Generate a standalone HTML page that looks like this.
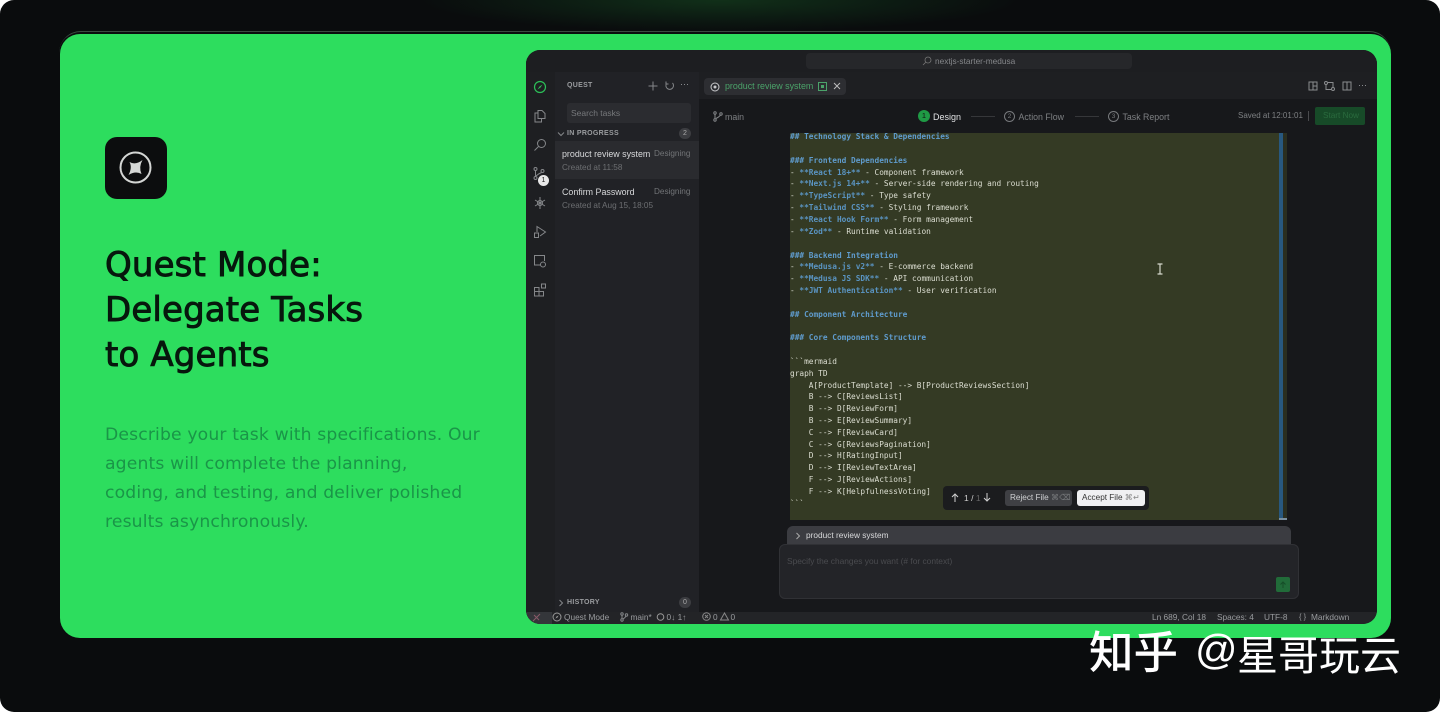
<!DOCTYPE html>
<html><head><meta charset="utf-8"><style>
html,body{margin:0;padding:0;background:#fff;width:1440px;height:712px;overflow:hidden}
#r{position:absolute;left:0;top:0;width:1440px;height:712px;overflow:hidden;background:#0a0c0d;border-radius:14px;font-family:"Liberation Sans",sans-serif}
.a{position:absolute}
.t{position:absolute;white-space:nowrap;line-height:12px;font-size:8.5px;color:#9a9c9f}
.c{position:absolute;left:790px;margin-top:.8px;white-space:pre;font:7.8px/12px "DejaVu Sans Mono","Liberation Mono",monospace;color:#dcded2}
.h{color:#5f9bcc;font-weight:bold}
.b{color:#5a94c2;font-weight:bold}
.ht{position:absolute;left:105px;white-space:nowrap;font-family:"DejaVu Sans",sans-serif;font-size:34px;line-height:44px;font-weight:normal;-webkit-text-stroke:.9px #07170d;letter-spacing:.15px;color:#07170d}
.p{position:absolute;left:105px;white-space:nowrap;font-family:"DejaVu Sans",sans-serif;font-size:17.2px;line-height:28px;letter-spacing:.15px;color:#1a9548}
svg{position:absolute;overflow:visible}
.i{fill:none;stroke:#85878a;stroke-width:1}
</style></head><body><div id="r">
<div class="a" style="left:420px;top:0;width:600px;height:60px;background:radial-gradient(ellipse 300px 32px at 300px 0,#113019 0,#0c1a12 60%,rgba(10,12,13,0) 100%)"></div>
<div class="a" style="left:59px;top:31px;width:1332px;height:608px;border-radius:22px;border-top:1px solid #3a4a40;box-sizing:border-box"></div>
<div class="a" style="left:60px;top:34px;width:1331px;height:604px;background:#2ddd5e;border-radius:20px"></div>

<div class="a" style="left:105px;top:137px;width:62px;height:62px;background:#0c0d0e;border-radius:12px"></div>
<svg style="left:105px;top:137px" width="62" height="62"><circle cx="30.5" cy="30.5" r="15" fill="none" stroke="#d4d6d4" stroke-width="2"/><path d="M37.500 23 Q33.500 30 36.500 37 Q30.500 33.500 23.500 38 Q27.500 30.500 24.500 25 Q30.500 28.500 37.500 23Z" fill="#d4d6d4"/></svg>
<div class="ht" style="top:242.500px">Quest Mode:</div>
<div class="ht" style="top:287.500px">Delegate Tasks</div>
<div class="ht" style="top:332.500px">to Agents</div>
<div class="p" style="top:420.500px">Describe your task with specifications. Our</div>
<div class="p" style="top:449.500px">agents will complete the planning,</div>
<div class="p" style="top:478.500px">coding, and testing, and deliver polished</div>
<div class="p" style="top:507.500px">results asynchronously.</div>

<div class="a" style="left:526px;top:50px;width:851px;height:574px;background:#1b1c1f;border-radius:14px;overflow:hidden;filter:blur(.25px)">
  <div class="a" style="left:0;top:0;width:851px;height:22px;background:#1d1e21"></div>
  <div class="a" style="left:280px;top:3px;width:326px;height:16px;background:#26272a;border-radius:4px"></div>
  <div class="a" style="left:0;top:22px;width:29px;height:540px;background:#1e1f22;border-right:1px solid #16171a"></div>
  <div class="a" style="left:29px;top:22px;width:144px;height:540px;background:#212226"></div>
  <div class="a" style="left:173px;top:22px;width:678px;height:27px;background:#1e1f22"></div>
  <div class="a" style="left:173px;top:49px;width:678px;height:513px;background:#17181b"></div>
  <div class="a" style="left:0;top:562px;width:851px;height:12px;background:#232427"></div>
  <div class="a" style="left:0;top:562px;width:26px;height:12px;background:#34363a"></div>
  <div class="a" style="left:29px;top:91px;width:144px;height:38px;background:#2a2b2f"></div>
  <div class="a" style="left:41px;top:53px;width:124px;height:20px;background:#2b2c30;border-radius:3px"></div>
  <div class="a" style="left:178px;top:28px;width:142px;height:17px;background:#2d2e32;border-radius:4px"></div>
  <div class="a" style="left:264px;top:83px;width:497px;height:387px;background:#343a24"></div>
  <div class="a" style="left:753px;top:83px;width:4px;height:387px;background:#28587f"></div>
  <div class="a" style="left:757px;top:83px;width:4px;height:387px;background:#2a2e20"></div>
  <div class="a" style="left:753px;top:468px;width:8px;height:2px;background:#7a8f9f"></div>
  <div class="a" style="left:261px;top:476px;width:504px;height:30px;background:#3b3c41;border-radius:6px 6px 0 0"></div>
  <div class="a" style="left:253px;top:494px;width:520px;height:55px;background:#232428;border:1px solid #303135;border-radius:6px;box-sizing:border-box"></div>
  <div class="a" style="left:750px;top:527px;width:14px;height:15px;background:#216b39;border-radius:2px"></div>
  <div class="a" style="left:789px;top:57px;width:50px;height:18px;background:#174a28;border-radius:2px"></div>
  <div class="a" style="left:417px;top:436px;width:206px;height:24px;background:#1b1c1e;border-radius:4px"></div>
  <div class="a" style="left:479px;top:440px;width:67px;height:16px;background:#3f4044;border-radius:3px"></div>
  <div class="a" style="left:551px;top:440px;width:68px;height:16px;background:#f0f0f2;border-radius:3px"></div>
</div>

<svg style="left:533px;top:80px" width="14" height="14"><circle cx="7" cy="7" r="5.500" fill="none" stroke="#2cc058" stroke-width="1.200"/><path d="M9.500 4.500 L7.500 7.500 L4.500 9.500 L6.500 6.500Z" fill="#2cc058"/></svg>
<svg style="left:533px;top:109px" width="14" height="14"><path class="i" d="M5 1.500h4l3 3v5h-7zM5 4H2v9h6.500v-3.500"/></svg>
<svg style="left:533px;top:138px" width="14" height="14"><circle class="i" cx="8.500" cy="5.500" r="4"/><path class="i" d="M5.500 8.500 L1.500 12.500"/></svg>
<svg style="left:533px;top:167px" width="14" height="14"><circle class="i" cx="2.500" cy="2" r="1.500"/><circle class="i" cx="2.500" cy="11" r="1.500"/><circle class="i" cx="9.500" cy="4" r="1.500"/><path class="i" d="M2.500 3.500v6M8.500 5.500 Q5 7 3 9"/></svg>
<div class="a" style="left:538px;top:175px;width:11px;height:11px;border-radius:50%;background:#e8e8e8;color:#222;font-size:7px;line-height:11px;text-align:center">1</div>
<svg style="left:533px;top:196px" width="14" height="14"><path class="i" d="M7 1v12M2 4l10 6M12 4L2 10"/><circle class="i" cx="7" cy="7" r="2.500" fill="#1e1f22"/></svg>
<svg style="left:533px;top:225px" width="14" height="14"><path class="i" d="M4 7V1.500L12.500 7 7 11"/><rect class="i" x="1.500" y="8" width="4" height="4.500"/></svg>
<svg style="left:533px;top:254px" width="14" height="14"><path class="i" d="M8 11H1.500V1.500h10V7"/><circle class="i" cx="10" cy="10.500" r="2.500"/></svg>
<svg style="left:533px;top:283px" width="14" height="14"><path class="i" d="M1.500 4.500h4.500v8.500H1.500zM1.500 8.500h9V13H6"/><rect class="i" x="8.500" y="1" width="4" height="4"/></svg>

<div class="t" style="left:567px;top:80px;font-size:7px;font-weight:bold;letter-spacing:.3px">QUEST</div>
<svg style="left:647px;top:80px" width="40" height="12"><path class="i" d="M6 1.500v9M1.500 6h9"/><path class="i" d="M25.500 3 A3.800 3.800 0 1 1 19.500 3.500M19 1.500v2.500h2.500"/></svg>
<div class="t" style="left:680px;top:78px;font-size:9px">···</div>
<div class="t" style="left:571px;top:107px;color:#77797c;font-size:8.500px">Search tasks</div>
<svg style="left:557px;top:130px" width="8" height="8"><path class="i" d="M1 2.500L4 5.500 7 2.500"/></svg>
<div class="t" style="left:567px;top:127.500px;font-size:7px;font-weight:bold;letter-spacing:.3px">IN PROGRESS</div>
<div class="a" style="left:679px;top:128px;width:12px;height:11px;border-radius:6px;background:#3c3d41;color:#aaa;font-size:7px;line-height:11px;text-align:center">2</div>
<div class="t" style="left:562px;top:148px;color:#d8d9db;font-size:8.900px">product review system</div>
<div class="t" style="left:654px;top:148px;color:#727477;font-size:8.200px">Designing</div>
<div class="t" style="left:562px;top:162px;color:#6d6f72;font-size:8.200px">Created at 11:58</div>
<div class="t" style="left:562px;top:186px;color:#d8d9db;font-size:8.900px">Confirm Password</div>
<div class="t" style="left:654px;top:186px;color:#727477;font-size:8.200px">Designing</div>
<div class="t" style="left:562px;top:200px;color:#6d6f72;font-size:8.200px">Created at Aug 15, 18:05</div>
<svg style="left:557px;top:599px" width="8" height="8"><path class="i" d="M2.500 1L5.500 4 2.500 7"/></svg>
<div class="t" style="left:567px;top:597px;font-size:7px;font-weight:bold;letter-spacing:.3px">HISTORY</div>
<div class="a" style="left:679px;top:597px;width:12px;height:11px;border-radius:6px;background:#3c3d41;color:#aaa;font-size:7px;line-height:11px;text-align:center">0</div>

<svg style="left:922px;top:56px" width="10" height="10"><circle cx="6" cy="4" r="3" fill="none" stroke="#777" stroke-width=".8"/><path d="M4 6L1 9" stroke="#777" stroke-width=".8"/></svg>
<div class="t" style="left:935px;top:55px;color:#85878a;font-size:8.300px">nextjs-starter-medusa</div>

<svg style="left:710px;top:82px" width="10" height="10"><circle cx="5" cy="5" r="4" fill="none" stroke="#c8c9cb"/><circle cx="5" cy="5" r="1.500" fill="#c8c9cb"/></svg>
<div class="t" style="left:725px;top:80px;color:#4ba36a;font-size:8.900px">product review system</div>
<div class="a" style="left:818px;top:82px;width:7px;height:7px;border:1px solid #4ba36a"></div>
<div class="a" style="left:821px;top:85px;width:3px;height:3px;background:#4ba36a"></div>
<svg style="left:833px;top:82px" width="8" height="8"><path d="M1 1L7 7M7 1L1 7" stroke="#bbb" stroke-width="1"/></svg>
<svg style="left:1308px;top:80px" width="60" height="12"><g class="i" style="stroke:#8a8c8f"><rect x="1" y="2" width="8" height="8"/><path d="M5 2v8M5 6h4"/><circle cx="18" cy="3" r="1.500"/><circle cx="25" cy="9" r="1.500"/><path d="M18 4.500v5h5M25 7.500V2.500h-5"/><rect x="35" y="2" width="8" height="8"/><path d="M39 2v8"/></g></svg>
<div class="t" style="left:1358px;top:79px;font-size:9px">···</div>

<svg style="left:713px;top:111px" width="10" height="11"><circle class="i" cx="2" cy="2" r="1.200"/><circle class="i" cx="2" cy="9" r="1.200"/><circle class="i" cx="8" cy="3" r="1.200"/><path class="i" d="M2 3.200v4.600M7.500 4.200Q6 6 3 7.500"/></svg>
<div class="t" style="left:725px;top:110.500px;font-size:8.800px;color:#7e8083">main</div>
<div class="a" style="left:918px;top:110px;width:12px;height:12px;border-radius:50%;background:#1f9a45;color:#111;font-size:7.500px;line-height:12px;text-align:center">1</div>
<div class="t" style="left:933px;top:110.500px;color:#e0e1e3;font-size:9px">Design</div>
<div class="a" style="left:971px;top:116px;width:24px;height:1px;background:#36373a"></div>
<div class="a" style="left:1004px;top:111px;width:9px;height:9px;border:1px solid #77797c;border-radius:50%;color:#77797c;font-size:6.500px;line-height:9px;text-align:center">2</div>
<div class="t" style="left:1018.500px;top:110.500px;color:#7e8083;font-size:8.800px">Action Flow</div>
<div class="a" style="left:1075px;top:116px;width:24px;height:1px;background:#36373a"></div>
<div class="a" style="left:1108px;top:111px;width:9px;height:9px;border:1px solid #77797c;border-radius:50%;color:#77797c;font-size:6.500px;line-height:9px;text-align:center">3</div>
<div class="t" style="left:1122.500px;top:110.500px;color:#7e8083;font-size:8.800px">Task Report</div>
<div class="t" style="left:1238px;top:110px;color:#7e8083;font-size:8px">Saved at 12:01:01</div>
<div class="a" style="left:1308px;top:111px;width:1px;height:10px;background:#4a4b4e"></div>
<div class="t" style="left:1323px;top:110px;color:#2a6b3e;font-size:8.200px">Start Now</div>

<div class="c h" style="top:130px">## Technology Stack &amp; Dependencies</div>
<div class="c h" style="top:154px">### Frontend Dependencies</div>
<div class="c" style="top:166px">- <span class="b">**React 18+**</span> - Component framework</div>
<div class="c" style="top:177.500px">- <span class="b">**Next.js 14+**</span> - Server-side rendering and routing</div>
<div class="c" style="top:189.500px">- <span class="b">**TypeScript**</span> - Type safety</div>
<div class="c" style="top:201px">- <span class="b">**Tailwind CSS**</span> - Styling framework</div>
<div class="c" style="top:213px">- <span class="b">**React Hook Form**</span> - Form management</div>
<div class="c" style="top:225px">- <span class="b">**Zod**</span> - Runtime validation</div>
<div class="c h" style="top:249px">### Backend Integration</div>
<div class="c" style="top:260.500px">- <span class="b">**Medusa.js v2**</span> - E-commerce backend</div>
<div class="c" style="top:272.500px">- <span class="b">**Medusa JS SDK**</span> - API communication</div>
<div class="c" style="top:284px">- <span class="b">**JWT Authentication**</span> - User verification</div>
<div class="c h" style="top:308px">## Component Architecture</div>
<div class="c h" style="top:331.500px">### Core Components Structure</div>
<div class="c" style="top:355px">&#96;&#96;&#96;mermaid</div>
<div class="c" style="top:367px">graph TD</div>
<div class="c" style="top:379px">    A[ProductTemplate] --&gt; B[ProductReviewsSection]</div>
<div class="c" style="top:390.500px">    B --&gt; C[ReviewsList]</div>
<div class="c" style="top:402.500px">    B --&gt; D[ReviewForm]</div>
<div class="c" style="top:414px">    B --&gt; E[ReviewSummary]</div>
<div class="c" style="top:426px">    C --&gt; F[ReviewCard]</div>
<div class="c" style="top:438px">    C --&gt; G[ReviewsPagination]</div>
<div class="c" style="top:449.500px">    D --&gt; H[RatingInput]</div>
<div class="c" style="top:461.500px">    D --&gt; I[ReviewTextArea]</div>
<div class="c" style="top:473px">    F --&gt; J[ReviewActions]</div>
<div class="c" style="top:485px">    F --&gt; K[HelpfulnessVoting]</div>
<div class="c" style="top:497px">&#96;&#96;&#96;</div>

<svg style="left:1156px;top:263px" width="8" height="12"><path d="M1.500 1h5M1.500 11h5M4 1v10" stroke="#d5d8cc" stroke-width="1.200" fill="none"/></svg>

<svg style="left:950px;top:492px" width="42" height="11"><path d="M5 10V2M2 5l3-3 3 3M37 1v8M34 6l3 3 3-3" stroke="#d0d0d0" fill="none"/></svg>
<div class="t" style="left:964px;top:491.500px;color:#d0d0d0;font-size:8.500px">1 / <span style="color:#666">1</span></div>
<div class="t" style="left:1010px;top:491.500px;color:#cfd0d2;font-size:8.200px">Reject File <span style="color:#77797c">&#8984;&#9003;</span></div>
<div class="t" style="left:1082px;top:491.500px;color:#333;font-size:8.200px">Accept File <span style="color:#888">&#8984;&#8629;</span></div>

<svg style="left:795px;top:532px" width="6" height="8"><path d="M1.500 1L4.500 4 1.500 7" stroke="#aaa" fill="none"/></svg>
<div class="t" style="left:806px;top:529px;color:#d8d9db;font-size:8.300px">product review system</div>
<div class="t" style="left:787px;top:555px;color:#4a4b4f;font-size:8.400px">Specify the changes you want (# for context)</div>
<svg style="left:1279px;top:581px" width="8" height="8"><path d="M4 7V1M1.500 3.500L4 1l2.500 2.500" stroke="#164d28" fill="none"/></svg>

<svg style="left:532px;top:613px" width="9" height="9"><path d="M1 8L8 1M2 2l5 5" stroke="#8a5a6a" fill="none"/></svg>
<svg style="left:552px;top:612px" width="10" height="10"><circle cx="5" cy="5" r="4" fill="none" stroke="#999"/><path d="M6.500 3.500L5.500 5.500 3.500 6.500 4.500 4.500Z" fill="#999"/></svg>
<div class="t" style="left:564px;top:611px;font-size:8.300px">Quest Mode</div>
<svg style="left:620px;top:612px" width="8" height="10"><circle class="i" cx="2" cy="2" r="1.200"/><circle class="i" cx="2" cy="8" r="1.200"/><circle class="i" cx="6.500" cy="3" r="1.200"/><path class="i" d="M2 3v4M6 4Q5 6 3 7"/></svg>
<div class="t" style="left:630.500px;top:611px;font-size:8.300px">main*</div>
<svg style="left:656px;top:612px" width="9" height="10"><circle cx="4.500" cy="5" r="3.300" fill="none" stroke="#999"/></svg>
<div class="t" style="left:666.500px;top:611px;font-size:8.300px">0&#8595; 1&#8593;</div>
<svg style="left:702px;top:612px" width="9" height="9"><circle cx="4.500" cy="4.500" r="3.800" fill="none" stroke="#888"/><path d="M3 3l3 3M6 3L3 6" stroke="#888"/></svg>
<div class="t" style="left:713px;top:611px;font-size:8.300px">0</div>
<svg style="left:720px;top:612px" width="9" height="9"><path d="M4.500 1L8.500 8h-8z" fill="none" stroke="#888"/></svg>
<div class="t" style="left:730.500px;top:611px;font-size:8.300px">0</div>
<div class="t" style="left:1152px;top:611px;font-size:8.300px">Ln 689, Col 18</div>
<div class="t" style="left:1217px;top:611px;font-size:8.300px">Spaces: 4</div>
<div class="t" style="left:1264px;top:611px;font-size:8.300px">UTF-8</div>
<div class="t" style="left:1299px;top:611px;font-size:7.500px">{ }</div>
<div class="t" style="left:1311px;top:611px;font-size:8.300px">Markdown</div>

<div class="a" style="left:1089px;top:624px;white-space:nowrap;font:500 44.500px/50px 'Noto Sans CJK SC',sans-serif;color:#fff">知乎</div>
<div class="a" style="left:1195px;top:625px;white-space:nowrap;font:42px/50px 'Liberation Sans','Noto Sans CJK SC',sans-serif;color:#fff">@</div>
<div class="a" style="left:1237px;top:628px;white-space:nowrap;font:41px/48px 'Noto Sans CJK SC',sans-serif;color:#fff">星哥玩云</div>
</div></body></html>
